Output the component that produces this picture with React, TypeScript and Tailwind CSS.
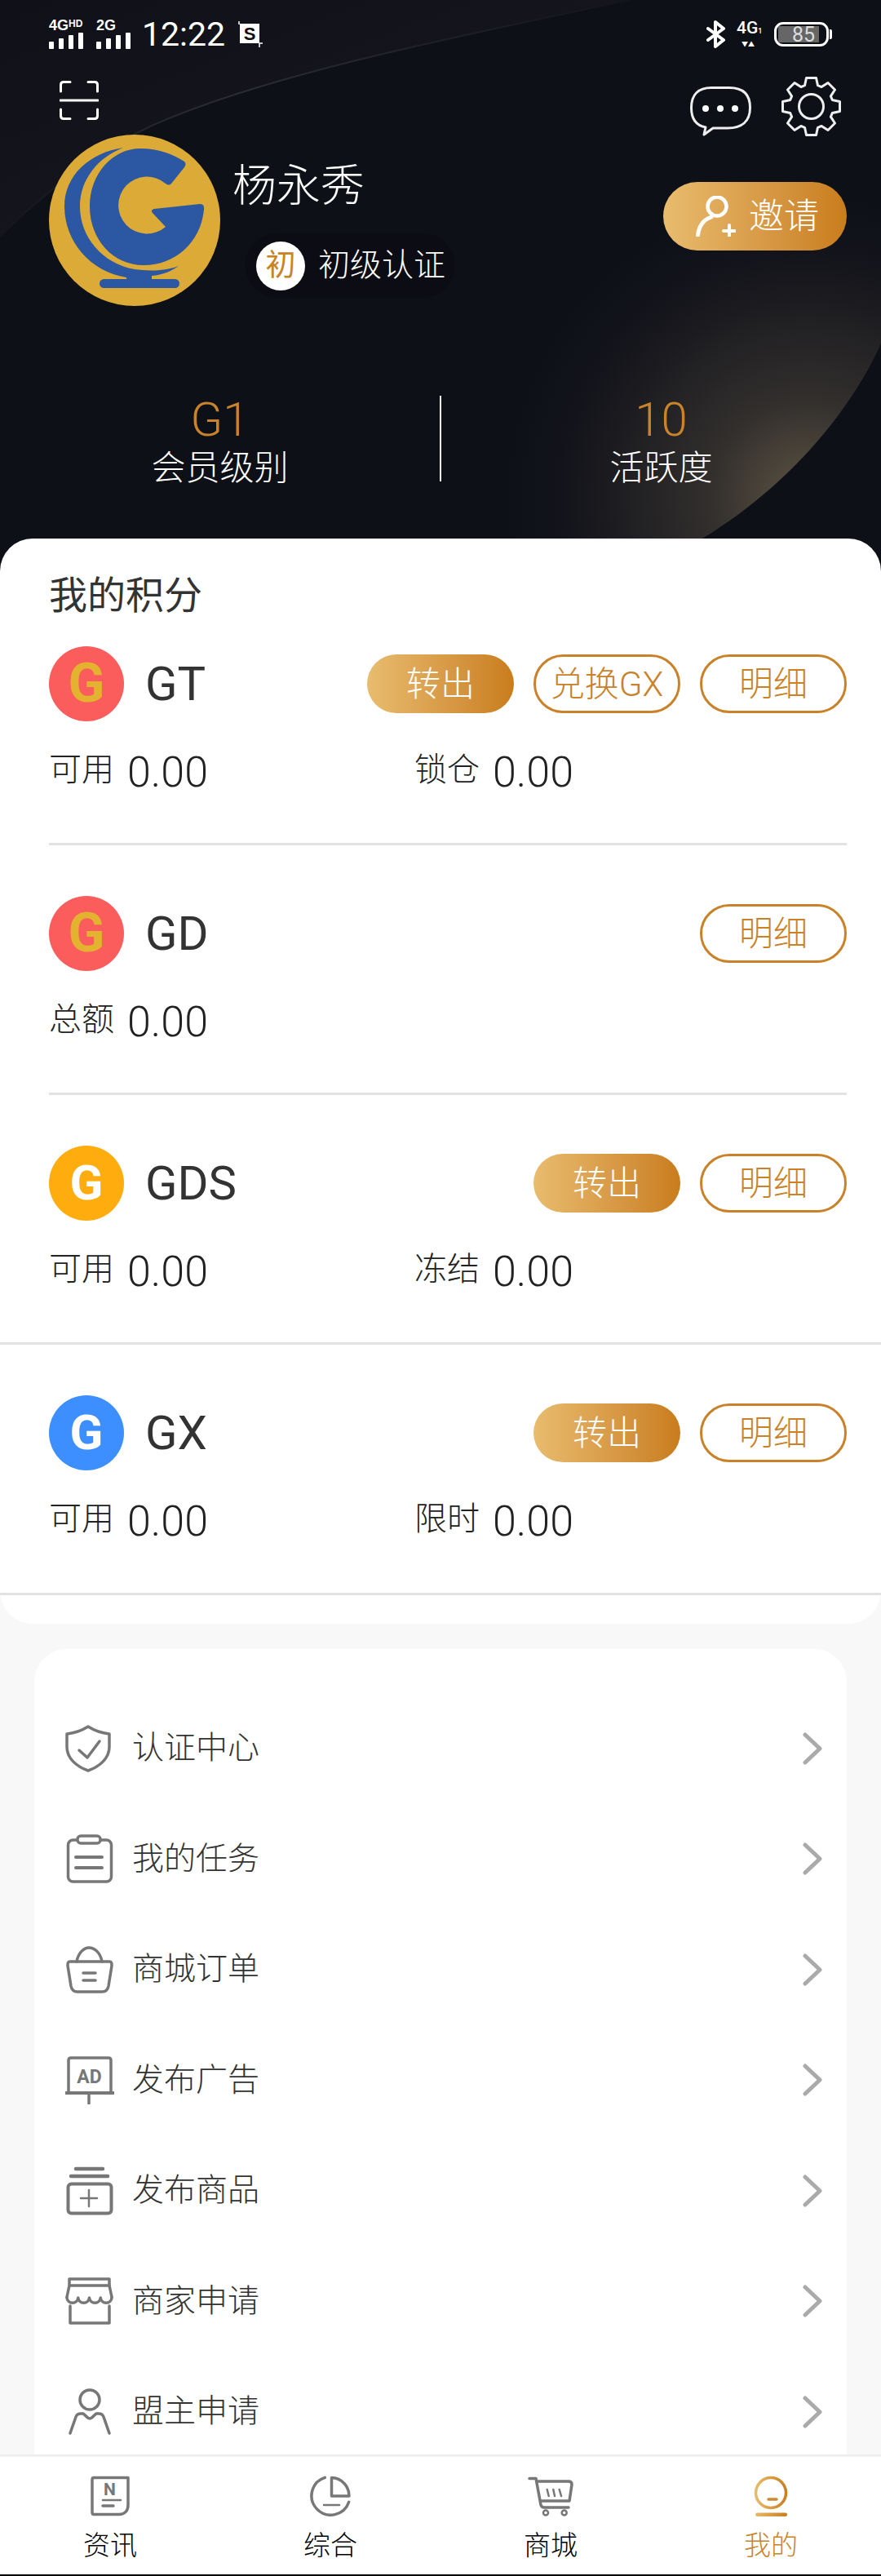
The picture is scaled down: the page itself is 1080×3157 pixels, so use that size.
import { ReactNode } from "react";

const gearPath = () => {
  const pts: string[] = [];
  const cx = 37.5;
  const cy = 37.5;
  for (let i = 0; i < 8; i++) {
    const a = (i * Math.PI) / 4 - Math.PI / 2;
    const offs: [number, number][] = [
      [-0.3, 27],
      [-0.17, 35.5],
      [0.17, 35.5],
      [0.3, 27],
    ];
    offs.forEach(([d, r]) => {
      pts.push(`${(cx + r * Math.cos(a + d)).toFixed(1)} ${(cy + r * Math.sin(a + d)).toFixed(1)}`);
    });
  }
  return "M" + pts.join(" L") + " Z";
};

const HeaderBg = () => (
  <svg className="absolute inset-0 w-full h-full" viewBox="0 0 1080 700" preserveAspectRatio="none">
    <defs>
      <linearGradient id="upper" x1="0" y1="0" x2="1" y2="1">
        <stop offset="0" stopColor="#101118" />
        <stop offset="1" stopColor="#191a21" />
      </linearGradient>
      <linearGradient id="edge" x1="0" y1="1" x2="1" y2="0">
        <stop offset="0" stopColor="#14151b" />
        <stop offset="0.5" stopColor="#2b2c33" />
        <stop offset="1" stopColor="#14151c" />
      </linearGradient>
      <radialGradient id="wedge" gradientUnits="userSpaceOnUse" cx="990" cy="610" r="400">
        <stop offset="0" stopColor="#5f5443" />
        <stop offset="0.3" stopColor="#322f2d" />
        <stop offset="0.65" stopColor="#19191e" />
        <stop offset="1" stopColor="#0e1018" stopOpacity="0" />
      </radialGradient>
    </defs>
    <rect width="1080" height="700" fill="#0e1018" />
    <path d="M0 0 H771 C560 45 330 90 186 154 C110 190 50 240 0 290 Z" fill="url(#upper)" />
    <path d="M771 0 C560 45 330 90 186 154 C110 190 50 240 0 290" fill="none" stroke="url(#edge)" strokeWidth="2" />
    <path d="M1080 421 C1040 510 960 600 861 660 L800 700 H480 V200 H1080 Z" fill="url(#wedge)" />
  </svg>
);

const Signal = ({ label, sup }: { label: string; sup?: string }) => (
  <div className="flex flex-col w-[44px] text-white font-bold">
    <div className="flex items-start h-[15px] text-[18px] leading-[15px] whitespace-nowrap font-['Liberation_Sans',sans-serif]">
      {label}
      {sup && <span className="text-[12px] leading-[11px]">{sup}</span>}
    </div>
    <div className="flex items-end gap-[6px] h-[20px] mt-[1px]">
      <span className="w-[6px] h-[9px] bg-white rounded-[1px]" />
      <span className="w-[6px] h-[13px] bg-white rounded-[1px]" />
      <span className="w-[6px] h-[17px] bg-white rounded-[1px]" />
      <span className="w-[6px] h-[20px] bg-white rounded-[1px]" />
    </div>
  </div>
);

const ScreenshotMark = () => (
  <svg className="ml-[16px]" width="30" height="32" viewBox="0 0 30 32">
    <rect x="2" y="3" width="24" height="24" fill="#fff" />
    <path d="M1 0 V4 M26 27 H30 M26 27 V32" stroke="#fff" strokeWidth="1.5" fill="none" />
    <text x="14" y="23" textAnchor="middle" fontSize="22" fontWeight="700" fill="#111" fontFamily="Liberation Sans, sans-serif">
      S
    </text>
  </svg>
);

const StatusBar = () => (
  <div className="relative flex items-center justify-between h-[84px] pl-[60px] pr-[60px] text-white">
    <div className="flex items-center">
      <Signal label="4G" sup="HD" />
      <div className="ml-[14px]">
        <Signal label="2G" />
      </div>
      <span className="ml-[12px] text-[41px] leading-none font-normal">12:22</span>
      <ScreenshotMark />
    </div>
    <div className="flex items-center">
      <svg width="24" height="34" viewBox="0 0 24 34" fill="none" stroke="#fff" strokeWidth="4" strokeLinejoin="round" strokeLinecap="round">
        <path d="M2 10 L21 24 L11 32 V2 L21 10 L2 24" />
      </svg>
      <div className="ml-[13px] w-[34px] flex flex-col items-start">
        <span className="text-[21px] leading-[20px] font-medium whitespace-nowrap">
          4G<span className="text-[9px]">1</span>
        </span>
        <span className="text-[8px] leading-[10px] ml-[6px] mt-[2px] whitespace-nowrap">▼▲</span>
      </div>
      <div className="ml-[12px] relative flex items-center w-[67px] h-[30px] rounded-[11px] border-[3px] border-white">
        <div className="ml-[2px] w-[50px] h-[20px] bg-[#666] flex items-center justify-center text-[25px] leading-none text-[#ddd]">
          <span className="ml-[12px]">85</span>
        </div>
      </div>
      <span className="ml-[1px] w-[3px] h-[12px] bg-white rounded-r-[2px]" />
    </div>
  </div>
);

const ScanIcon = () => (
  <svg width="48" height="48" viewBox="0 0 48 48" fill="none" stroke="#fff" strokeWidth="3" strokeLinecap="round">
    <path d="M1.5 13 V5 Q1.5 1.5 5 1.5 H13" />
    <path d="M35 1.5 H43 Q46.5 1.5 46.5 5 V13" />
    <path d="M1.5 35 V43 Q1.5 46.5 5 46.5 H13" />
    <path d="M35 46.5 H43 Q46.5 46.5 46.5 43 V35" />
    <path d="M1 24 H47" />
  </svg>
);

const ChatIcon = () => (
  <svg width="75" height="61" viewBox="0 0 75 61" fill="none" stroke="#eee" strokeWidth="3" strokeLinejoin="round">
    <path d="M26 1.5 H48 C65 1.5 73.5 10 73.5 26 C73.5 43 63 51 46 51 H28 L17 59 L19 50 C8 48 1.5 40 1.5 26 C1.5 10 10 1.5 26 1.5 Z" />
    <circle cx="19" cy="27" r="4" fill="#fff" stroke="none" />
    <circle cx="37" cy="27" r="4" fill="#fff" stroke="none" />
    <circle cx="55" cy="27" r="4" fill="#fff" stroke="none" />
  </svg>
);

const GearIcon = () => (
  <svg width="75" height="75" viewBox="0 0 75 75" fill="none" stroke="#eee" strokeWidth="3" strokeLinejoin="round">
    <path d={gearPath()} />
    <circle cx="37.5" cy="37.5" r="15" />
  </svg>
);

const Avatar = () => (
  <svg width="210" height="210" viewBox="0 0 210 210" className="shrink-0">
    <circle cx="105" cy="105" r="105" fill="#dcaa36" />
    <path
      fill="#2c58a3"
      d="M112 17 C135 17 152 24 166 33 Q169 36 166 40 L150 60 Q147 63 143 60 A35 35 0 1 0 143 113 L127 96 Q124 92 129 91 L185 85 Q191 85 190 92 C186 132 155 160 116 160 C78 160 50 128 50 88 C50 48 78 17 112 17 Z"
    />
    <path
      fill="#2c58a3"
      d="M91 16 C50 22 19 50 19 88 C19 130 50 168 95 175 L95 177 H126 L126 173 C140 172 150 167 159 161 C140 168 120 167 105 165 C65 158 38 125 38 88 C38 55 60 28 91 16 Z"
    />
    <rect x="62" y="177" width="98" height="11" rx="5.5" fill="#2c58a3" />
  </svg>
);

const InviteIcon = () => (
  <svg width="50" height="50" viewBox="0 0 50 50" fill="none" stroke="#fff" strokeLinecap="round">
    <circle cx="27" cy="13" r="11.5" strokeWidth="4.5" />
    <path d="M3.5 48 C5 36 11 29 20 26" strokeWidth="5" />
    <path d="M42 36 V50 M35 43 H49" strokeWidth="4" />
  </svg>
);

const Header = () => (
  <div className="relative h-[700px] shrink-0 overflow-hidden bg-[#0e1018]">
    <HeaderBg />
    <StatusBar />
    <div className="relative flex justify-between h-[72px] mt-[9px] pl-[73px] pr-[48px]">
      <div className="mt-[6px]">
        <ScanIcon />
      </div>
      <div className="flex gap-[36px]">
        <div className="mt-[13px]">
          <ChatIcon />
        </div>
        <GearIcon />
      </div>
    </div>
    <div className="relative flex items-start pl-[60px] pr-[42px]">
      <Avatar />
      <div className="ml-[15px]">
        <div className="mt-[37px] text-[54px] leading-none text-white font-light">杨永秀</div>
        <div className="flex items-center ml-[15px] mt-[30px] w-[258px] h-[79px] rounded-full bg-[#0c0d13]/70">
          <span className="ml-[14px] flex items-center justify-center w-[60px] h-[60px] rounded-full bg-white text-[#c98326] text-[37px] leading-none">
            初
          </span>
          <span className="ml-[16px] text-[39px] leading-none text-white font-light">初级认证</span>
        </div>
      </div>
      <button className="ml-auto mt-[58px] flex items-center w-[225px] h-[84px] pl-[39px] rounded-full bg-linear-to-r from-[#e8bc6e] to-[#c97d1b] text-white text-[43px] leading-none font-light">
        <InviteIcon />
        <span className="ml-[16px]">邀请</span>
      </button>
    </div>
    <div className="relative flex items-center mt-[110px] h-[105px]">
      <div className="flex-1 flex flex-col items-center pt-[6px]">
        <span className="text-[58px] leading-[58px] text-[#c9842b] font-light">G1</span>
        <span className="mt-[8px] text-[42px] leading-[46px] text-white font-light">会员级别</span>
      </div>
      <span className="w-[2px] h-[105px] bg-white" />
      <div className="flex-1 flex flex-col items-center pt-[6px]">
        <span className="text-[58px] leading-[58px] text-[#c9842b] font-light">10</span>
        <span className="mt-[8px] text-[42px] leading-[46px] text-white font-light">活跃度</span>
      </div>
    </div>
  </div>
);

const FilledBtn = ({ label }: { label: string }) => (
  <button className="flex items-center justify-center w-[180px] h-[72px] pt-[2px] rounded-full bg-linear-to-r from-[#e8bc6e] to-[#c97d1b] text-white text-[42px] leading-none font-light">
    {label}
  </button>
);

const OutlineBtn = ({ label }: { label: string }) => (
  <button className="flex items-center justify-center w-[180px] h-[72px] pt-[2px] rounded-full border-[3px] border-[#c9822a] text-[#c9822a] text-[42px] leading-none font-light whitespace-nowrap">
    {label}
  </button>
);

const Value = ({ label, className }: { label: string; className?: string }) => (
  <div className={className}>
    <div className="flex items-center h-[50px]">
      <span className="text-[40px] leading-none text-[#222] font-light -mt-[6px]">{label}</span>
      <span className="ml-[16px] text-[52px] leading-none text-[#222] font-light">0.00</span>
    </div>
  </div>
);

type RowProps = {
  name: string;
  circle: string;
  glyph: string;
  buttons: ReactNode;
  values: string[];
  rowClass: string;
};

const Row = ({ name, circle, glyph, buttons, values, rowClass }: RowProps) => (
  <div className={rowClass}>
    <div className="flex items-center h-[92px]">
      <span className={circle}>
        <span className={glyph}>G</span>
      </span>
      <span className="ml-[26px] text-[58px] leading-none text-[#333] font-normal">{name}</span>
      <div className="ml-auto flex gap-[24px]">{buttons}</div>
    </div>
    <div className="flex mt-[38px]">
      <Value label={values[0]} className="w-[448px]" />
      {values[1] && <Value label={values[1]} />}
    </div>
  </div>
);

const redCircle = "flex items-center justify-center w-[92px] h-[92px] rounded-full bg-[#fb5c5c]";
const goldG = "text-[66px] leading-none font-bold text-[#e3b32f]";
const whiteG = "text-[60px] leading-none font-bold text-white";

const Points = () => (
  <div className="relative -mt-[40px] h-[1330px] shrink-0 rounded-[40px] bg-white">
    <div className="h-[93px] pt-[46px] pl-[60px] text-[47px] leading-none text-[#333] font-normal">我的积分</div>
    <Row
      name="GT"
      circle={redCircle}
      glyph={goldG}
      values={["可用", "锁仓"]}
      rowClass="h-[283px] ml-[60px] mr-[42px] pt-[39px] border-b-[3px] border-[#e2e2e2]"
      buttons={
        <>
          <FilledBtn label="转出" />
          <OutlineBtn label="兑换GX" />
          <OutlineBtn label="明细" />
        </>
      }
    />
    <Row
      name="GD"
      circle={redCircle}
      glyph={goldG}
      values={["总额"]}
      rowClass="h-[306px] ml-[60px] mr-[42px] pt-[62px] border-b-[3px] border-[#e2e2e2]"
      buttons={<OutlineBtn label="明细" />}
    />
    <Row
      name="GDS"
      circle="flex items-center justify-center w-[92px] h-[92px] rounded-full bg-[#ffac0f]"
      glyph={whiteG}
      values={["可用", "冻结"]}
      rowClass="h-[306px] pl-[60px] pr-[42px] pt-[62px] border-b-[3px] border-[#e2e2e2]"
      buttons={
        <>
          <FilledBtn label="转出" />
          <OutlineBtn label="明细" />
        </>
      }
    />
    <Row
      name="GX"
      circle="flex items-center justify-center w-[92px] h-[92px] rounded-full bg-[#3d8fff]"
      glyph={whiteG}
      values={["可用", "限时"]}
      rowClass="h-[307px] pl-[60px] pr-[42px] pt-[62px] border-b-[3px] border-[#e2e2e2]"
      buttons={
        <>
          <FilledBtn label="转出" />
          <OutlineBtn label="明细" />
        </>
      }
    />
  </div>
);

const menu: { label: string; icon: ReactNode }[] = [
  {
    label: "认证中心",
    icon: (
      <>
        <path d="M28 3 C36 8 45 11 54 12 V28 C54 42 42 52 28 57 C14 52 2 42 2 28 V12 C11 11 20 8 28 3 Z" />
        <path d="M17 32 L27 41 L42 21" />
      </>
    ),
  },
  {
    label: "我的任务",
    icon: (
      <>
        <rect x="3.5" y="7" width="53" height="51" rx="6" />
        <rect x="15" y="2" width="28" height="9" rx="4" fill="#fff" />
        <path d="M13 28 H45 M13 41 H45" strokeWidth="4" />
      </>
    ),
  },
  {
    label: "商城订单",
    icon: (
      <>
        <path d="M6 20 H54 C57 20 57 22 57 25 L53 50 C52 55 49 57 45 57 H15 C11 57 8 55 7 50 L3 25 C3 22 3 20 6 20 Z" />
        <path d="M14 20 C16 9 23 3 29 3 C36 3 43 9 45 20" />
        <path d="M22 34 H37 M22 43 H37" />
      </>
    ),
  },
  {
    label: "发布广告",
    icon: (
      <>
        <path d="M4 46 V6 Q4 3 7 3 H53 Q56 3 56 6 V46" />
        <path d="M1 46 H59" strokeWidth="4" />
        <path d="M29 46 V59" />
        <text x="29.5" y="34" textAnchor="middle" fontSize="23" fontWeight="700" fill="#777" stroke="none" fontFamily="Roboto, sans-serif">
          AD
        </text>
      </>
    ),
  },
  {
    label: "发布商品",
    icon: (
      <>
        <rect x="3.5" y="21.5" width="53" height="36" rx="4" strokeWidth="4" />
        <path d="M13 3 H46" strokeWidth="4.5" />
        <path d="M7 12 H52" strokeWidth="4.5" />
        <path d="M29 29 V49 M19 39 H39" strokeWidth="2.5" />
      </>
    ),
  },
  {
    label: "商家申请",
    icon: (
      <>
        <path d="M5 11 V3 H54 V11 Z" />
        <path d="M5 11 L2 25 M54 11 L57 25" />
        <path d="M2 26 a6.9 6.9 0 0 0 13.75 0 a6.9 6.9 0 0 0 13.75 0 a6.9 6.9 0 0 0 13.75 0 a6.9 6.9 0 0 0 13.75 0" />
        <path d="M6 36 V57 H54 V36" />
      </>
    ),
  },
  {
    label: "盟主申请",
    icon: (
      <>
        <circle cx="30" cy="15" r="12" />
        <path d="M6 56 L13 36 C14 33 16 32 19 32 L22 32 C25 34 27 38 30 38 C33 38 35 34 38 32 L41 32 C44 32 46 33 47 36 L54 56" />
      </>
    ),
  },
];

const MenuList = () => (
  <div className="mt-[31px] mx-[42px] pt-[54px] h-[1100px] rounded-t-[40px] bg-white">
    {menu.map((item) => (
      <div key={item.label} className="flex items-center h-[135.5px] pl-[38px] pr-[30px]">
        <svg width="60" height="60" viewBox="0 0 60 60" fill="none" stroke="#777" strokeWidth="3.5" strokeLinecap="round" strokeLinejoin="round">
          {item.icon}
        </svg>
        <span className="ml-[22px] text-[39px] leading-none text-[#333] font-light">{item.label}</span>
        <svg className="ml-auto" width="24" height="40" viewBox="0 0 24 40" fill="none" stroke="#aaa" strokeWidth="5" strokeLinecap="round" strokeLinejoin="round">
          <path d="M3 3 L21 20 L3 37" />
        </svg>
      </div>
    ))}
  </div>
);

const tabs: { label: string; active?: boolean; width: number; icon: ReactNode }[] = [
  {
    label: "资讯",
    width: 50,
    icon: (
      <>
        <path d="M5 2.5 H47 V36 C47 43 43 47.5 36 47.5 H5 Q3 47.5 3 45 V5 Q3 2.5 5 2.5 Z" />
        <text x="24.5" y="24" textAnchor="middle" fontSize="21" fontWeight="700" fill="#777" stroke="none" fontFamily="Roboto, sans-serif">
          N
        </text>
        <path d="M16 30 H38" strokeWidth="2.5" />
        <path d="M16 37 H29" strokeWidth="3.5" />
      </>
    ),
  },
  {
    label: "综合",
    width: 50,
    icon: (
      <>
        <path d="M18.3 2.3 A23.5 23.5 0 1 0 47.7 32.3" />
        <path d="M26.5 2.5 V25 H48 C48 13 39 3 26.5 2.5 Z" />
        <path d="M17 36 H36" strokeWidth="2.5" />
      </>
    ),
  },
  {
    label: "商城",
    width: 60,
    icon: (
      <>
        <path d="M4 3.5 H12 L18 36 Q19 39 22 39 H52" />
        <path d="M13 7 H52 Q56 7 56 11 L53 31 H17.7" />
        <circle cx="24" cy="45.5" r="3" strokeWidth="2.5" />
        <circle cx="46.7" cy="45.5" r="3" strokeWidth="2.5" />
        <path d="M25.7 17 L27.7 25 M33.3 17 L35 25 M40.7 17 L43 25" strokeWidth="2.5" />
      </>
    ),
  },
  {
    label: "我的",
    active: true,
    width: 50,
    icon: (
      <>
        <defs>
          <linearGradient id="mine" gradientUnits="userSpaceOnUse" x1="5" y1="0" x2="45" y2="0">
            <stop offset="0" stopColor="#e8bc6e" />
            <stop offset="1" stopColor="#c97d1b" />
          </linearGradient>
        </defs>
        <circle cx="25" cy="21" r="18.5" stroke="url(#mine)" />
        <path d="M22 29 H32" stroke="#c98a30" strokeWidth="3.5" />
        <rect x="6" y="45.5" width="39" height="4.5" rx="2.2" fill="url(#mine)" stroke="none" />
      </>
    ),
  },
];

const TabBar = () => (
  <div className="grid grid-cols-4 h-[149px] shrink-0 pt-[23px] bg-white border-t-[3px] border-b-2 border-t-[#eeeeee] border-b-black">
    {tabs.map((tab) => (
      <div key={tab.label} className="flex flex-col items-center">
        <svg width={tab.width} height="50" viewBox={`0 0 ${tab.width} 50`} fill="none" stroke="#777" strokeWidth="3.5" strokeLinecap="round" strokeLinejoin="round">
          {tab.icon}
        </svg>
        <span className={tab.active ? "mt-[19px] text-[33px] leading-none text-[#c9842b] font-light" : "mt-[19px] text-[33px] leading-none text-black font-light"}>
          {tab.label}
        </span>
      </div>
    ))}
  </div>
);

export default function App() {
  return (
    <div className="flex flex-col w-[1080px] h-[3157px] overflow-hidden bg-[#f8f8f8] font-['Roboto','Noto_Sans_CJK_SC',sans-serif]">
      <div className="flex-1 min-h-0 overflow-hidden">
        <Header />
        <Points />
        <MenuList />
      </div>
      <TabBar />
    </div>
  );
}
